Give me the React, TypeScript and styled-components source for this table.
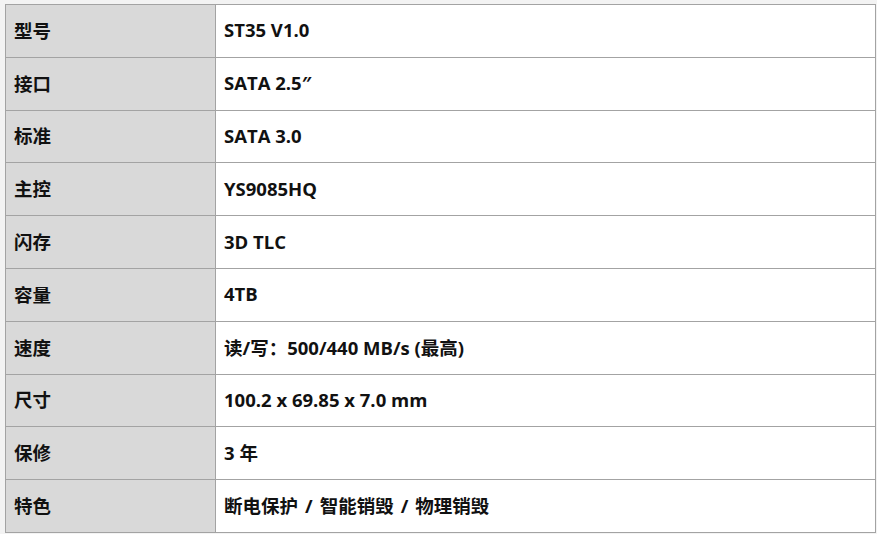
import styled, { createGlobalStyle } from 'styled-components';

const GlobalStyle = createGlobalStyle`
  html, body {
    margin: 0;
    padding: 0;
    background: #f3f3f3;
  }
`;

const Page = styled.div`
  padding: 4px 1px 0 5px;
  font-family: 'Open Sans', 'Noto Sans CJK SC', sans-serif;
`;

const SpecTable = styled.table`
  width: 871px;
  border-collapse: collapse;
  background: #ffffff;
  border: 1px solid #a3a3a3;
`;

const Row = styled.tr`
  height: 52.8px;
`;

const Cell = styled.td<{ $head?: boolean }>`
  border: 1px solid #a3a3a3;
  padding: 0 8px 2px;
  font-size: 18.5px;
  font-weight: 700;
  color: #111111;
  vertical-align: middle;
  background: ${p => (p.$head ? '#d9d9d9' : '#ffffff')};
  width: ${p => (p.$head ? '193px' : 'auto')};
`;

const Sep = styled.span`
  margin: 0 7px;
`;

const specs: [string, string][] = [
  ['型号', 'ST35 V1.0'],
  ['接口', 'SATA 2.5″'],
  ['标准', 'SATA 3.0'],
  ['主控', 'YS9085HQ'],
  ['闪存', '3D TLC'],
  ['容量', '4TB'],
  ['速度', '读/写：500/440 MB/s (最高)'],
  ['尺寸', '100.2 x 69.85 x 7.0 mm'],
  ['保修', '3 年'],
  ['特色', '断电保护|智能销毁|物理销毁'],
];

function renderValue(value: string) {
  const parts = value.split('|');
  if (parts.length === 1) return value;
  return parts.map((part, i) => (
    <span key={part}>
      {i > 0 && <Sep>/</Sep>}
      {part}
    </span>
  ));
}

export default function App() {
  return (
    <>
      <GlobalStyle />
      <Page>
        <SpecTable>
          <tbody>
            {specs.map(([label, value]) => (
              <Row key={label}>
                <Cell $head>{label}</Cell>
                <Cell>{renderValue(value)}</Cell>
              </Row>
            ))}
          </tbody>
        </SpecTable>
      </Page>
    </>
  );
}
